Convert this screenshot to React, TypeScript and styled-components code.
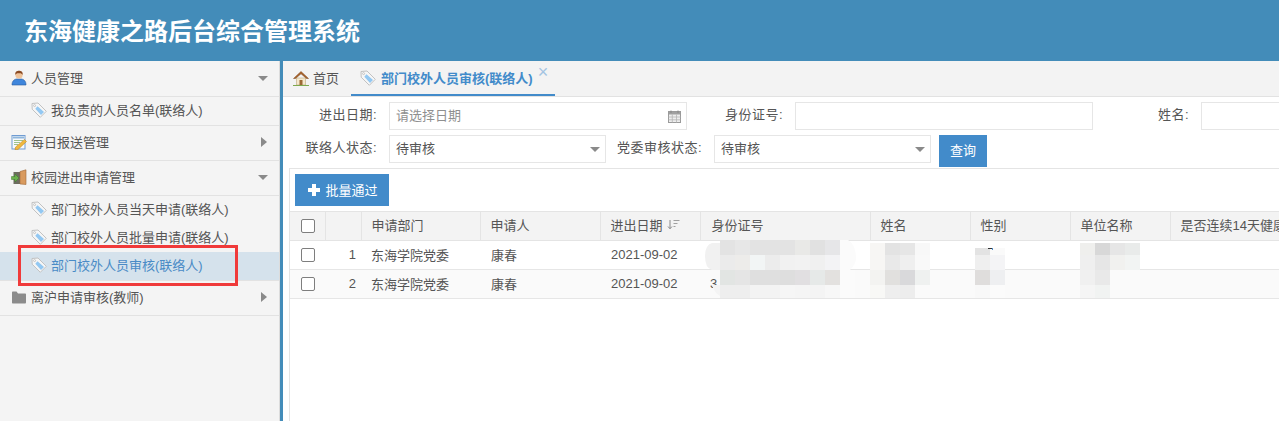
import React from "react";
import styled, { createGlobalStyle } from "styled-components";

const Global = createGlobalStyle`
  html, body { margin: 0; padding: 0; height: 100%; overflow: hidden; background: #fff; }
  body { font-family: "Liberation Sans", "Noto Sans CJK SC", sans-serif; font-size: 13px; color: #555; }
  * { box-sizing: border-box; }
`;

const Page = styled.div`
  position: relative;
  width: 1279px;
  height: 421px;
  overflow: hidden;
  display: flex;
  flex-direction: column;
`;
const Header = styled.header`
  flex: 0 0 61px;
  min-height: 0;
  overflow: hidden;
  background: #438cb9;
  color: #fff;
  font-size: 24px;
  font-weight: 700;
  line-height: 63px;
  padding-left: 24px;
  white-space: nowrap;
`;
const Body = styled.div`
  flex: 1;
  display: flex;
  min-height: 0;
`;
const Sidebar = styled.aside`
  flex: 0 0 280px;
  background: #f4f4f4;
  border-right: 1px solid #dcdcdc;
`;
const Splitter = styled.div`
  flex: 0 0 3px;
  background: #438cb9;
`;
const GroupHead = styled.div<{ $first?: boolean }>`
  height: ${(p) => (p.$first ? "36px" : "35px")};
  display: flex;
  align-items: center;
  padding: 0 10px ${(p) => (p.$first ? "2px" : "3px")} 11px;
  border-bottom: 1px solid #e2e2e2;
  gap: 4px;
`;
const GroupIcon = styled.span`
  width: 16px;
  height: 16px;
  display: flex;
`;
const GroupTitle = styled.span`
  flex: 1;
`;
const CaretDown = styled.i`
  width: 0;
  height: 0;
  border-left: 5px solid transparent;
  border-right: 5px solid transparent;
  border-top: 5px solid #8a8a8a;
  margin-top: 2px;
  margin-right: 1px;
`;
const CaretRight = styled.i`
  width: 0;
  height: 0;
  border-top: 5px solid transparent;
  border-bottom: 5px solid transparent;
  border-left: 6px solid #8a8a8a;
  margin-right: 2px;
`;
const ItemList = styled.div`
  border-bottom: 1px solid #e2e2e2;
`;
const Item = styled.div<{ $active?: boolean }>`
  height: 28px;
  display: flex;
  align-items: center;
  gap: 4px;
  padding: 0 0 3px 31px;
  background: ${(p) => (p.$active ? "#d5e2ec" : "transparent")};
  color: ${(p) => (p.$active ? "#4a8bc6" : "#555")};
`;
const RedMark = styled.div`
  position: absolute;
  left: 18px;
  top: 245px;
  width: 220px;
  height: 41px;
  border: 3px solid #f03a3a;
  pointer-events: none;
`;
const Main = styled.main`
  flex: 1;
  min-width: 0;
  display: flex;
  flex-direction: column;
`;
const TabBar = styled.nav`
  flex: 0 0 36px;
  background: #f3f3f3;
  border-bottom: 1px solid #e2e2e2;
  display: flex;
  padding-left: 10px;
`;
const Tab = styled.div<{ $active?: boolean }>`
  height: 35px;
  display: flex;
  align-items: center;
  gap: ${(p) => (p.$active ? "5px" : "4px")};
  padding: 0 ${(p) => (p.$active ? "7px" : "12px")} 0 ${(p) => (p.$active ? "9px" : "0")};
  border-bottom: 2px solid ${(p) => (p.$active ? "#428bca" : "transparent")};
  color: ${(p) => (p.$active ? "#428bca" : "#555")};
  font-weight: ${(p) => (p.$active ? 700 : 400)};
`;
const Close = styled.span`
  font-size: 18px;
  font-weight: 400;
  line-height: 12px;
  color: #a4c4e2;
  margin: -11px 0 0 0;
`;
const Filters = styled.section`
  padding: 5px 0 0 4px;
  margin-left: 6px;
  border-bottom: 1px solid #e4e4e4;
`;
const FormRow = styled.div`
  display: flex;
  align-items: flex-start;
  height: 28px;
  & + & {
    margin-top: 5px;
    height: 33px;
  }
  white-space: nowrap;
`;
const Label = styled.label<{ $w: number }>`
  flex: 0 0 ${(p) => p.$w}px;
  width: ${(p) => p.$w}px;
  text-align: right;
  line-height: 25px;
  letter-spacing: 0.5px;
  margin-right: 12px;
`;
const Field = styled.div<{ $w: number }>`
  flex: 0 0 ${(p) => p.$w}px;
  width: ${(p) => p.$w}px;
  height: 28px;
  border: 1px solid #e6e6e6;
  background: #fff;
  display: flex;
  align-items: center;
  justify-content: space-between;
  padding: 0 5px 3px 6px;
`;
const Placeholder = styled.span`
  color: #8f8f8f;
`;
const CalendarBox = styled.span`
  display: flex;
  margin-top: 3px;
`;
const FieldCaret = styled(CaretDown)`
  margin: 4px 0 0 0;
`;
const QueryButton = styled.button`
  flex: 0 0 48px;
  height: 32px;
  margin-left: 8px;
  border: 0;
  padding: 0 0 3px;
  background: #428bca;
  color: #fff;
  font: inherit;
`;
const Content = styled.section`
  flex: 1;
  margin-left: 6px;
  border-left: 1px solid #e4e4e4;
  min-height: 0;
`;
const Toolbar = styled.div`
  height: 42px;
  padding: 5px 0 0 5px;
`;
const PrimaryButton = styled.button`
  width: 94px;
  height: 32px;
  border: 0;
  padding: 0 0 1px 1px;
  background: #428bca;
  color: #fff;
  font: inherit;
  display: flex;
  align-items: center;
  justify-content: center;
  gap: 4px;
`;
const Table = styled.table`
  width: 1000px;
  table-layout: fixed;
  border-collapse: collapse;
  white-space: nowrap;
`;
const Th = styled.th<{ $pl?: number }>`
  height: 29px;
  padding: 0 0 3px ${(p) => p.$pl ?? 10}px;
  background: #f3f3f3;
  border: 1px solid #e4e4e4;
  border-width: 1px 1px 1px 0;
  font-weight: 400;
  text-align: left;
  overflow: hidden;
`;
const Td = styled.td<{ $pl?: number }>`
  height: 29px;
  padding: 0 0 2px ${(p) => p.$pl ?? 10}px;
  border-bottom: 1px solid #e6e6e6;
  overflow: hidden;
`;
const NumTd = styled(Td)`
  padding: 0 5px 2px 0;
  text-align: right;
`;
const CheckCell = styled(Td)`
  padding: 0 0 0 11px;
`;
const CheckHead = styled(Th)`
  padding: 0 0 0 11px;
`;
const Row = styled.tr<{ $alt?: boolean }>`
  background: ${(p) => (p.$alt ? "#fafafa" : "#fff")};
`;
const Check = styled.span`
  display: block;
  width: 14px;
  height: 14px;
  border: 1px solid #7e7e7e;
  border-radius: 2px;
  background: #fff;
`;
const SortMark = styled.span`
  margin-left: 1px;
`;
const Mosaic = styled.svg`
  position: absolute;
  left: 0;
  top: 0;
  pointer-events: none;
`;

const TagIcon = () => (
  <svg width="16" height="16" viewBox="0 0 16 16">
    <path d="M1 1.500 7 1 15.300 9.300 9.300 15.300 1.200 7.200Z" fill="#f6f6f6" stroke="#c2c2c2" />
    <path d="M6.500 4.300 13 10 10 13 4.300 6.800Z" fill="#93c8f2" />
    <circle cx="3.600" cy="3.600" r="1" fill="#fff" stroke="#aaa" strokeWidth=".6" />
  </svg>
);
const PersonIcon = () => (
  <svg width="16" height="16" viewBox="0 0 16 16">
    <path d="M1 15c0-4 2-5.500 4.500-6h5c2.500.5 4.500 2 4.500 6Z" fill="#3f86dc" stroke="#2a5c9e" strokeWidth=".6" />
    <circle cx="8" cy="5" r="3.600" fill="#efc39a" />
    <path d="M4.300 5C4 1.500 6 .8 8 .8s4 .7 3.700 4.200C10.800 3.300 9.500 3 8 3.300 6.300 3 5 3.400 4.300 5Z" fill="#8a4a22" />
  </svg>
);
const NoteIcon = () => (
  <svg width="16" height="16" viewBox="0 0 16 16">
    <rect x="1" y="1.500" width="13" height="13.500" fill="#f7fafc" stroke="#6f9bd2" />
    <rect x="2" y="2.500" width="11" height="2" fill="#8fb6dc" />
    <path d="M3 6.500h9M3 8.500h6M3 10.500h4" stroke="#9ec38e" />
    <path d="M13.500 5.500 15.500 7.500 7 15.500 4 16 4.600 13Z" fill="#f0b93e" stroke="#b87d1e" strokeWidth=".5" />
  </svg>
);
const DoorIcon = () => (
  <svg width="16" height="16" viewBox="0 0 16 16">
    <rect x="2.500" y="3" width="7" height="12" fill="#6d6d60" />
    <path d="M9 2.500 15 .8V15.500L9 15Z" fill="#d99a5e" stroke="#9d6a3a" strokeWidth=".6" />
    <path d="M0.500 7.500H4V5l4 4-4 4v-2.500H.5Z" fill="#6cb24e" stroke="#3d7a2a" strokeWidth=".5" />
  </svg>
);
const FolderIcon = () => (
  <svg width="16" height="16" viewBox="0 0 16 16">
    <path d="M1 3.500C1 3 1.300 2.500 2 2.500h3.500L7 4.500h7c.6 0 1 .4 1 1V13.500c0 .5-.4 1-1 1H2c-.6 0-1-.4-1-1Z" fill="#8b8b8b" />
  </svg>
);
const HomeIcon = () => (
  <svg width="16" height="16" viewBox="0 0 16 16">
    <path d="M3.500 8H12.500V15H3.500Z" fill="#f4e8cc" stroke="#b39a6a" strokeWidth=".5" />
    <rect x="6.500" y="10" width="3" height="5" fill="#9c6a36" />
    <path d="M.5 8.500 8 1.500 15.500 8.500 13.500 8.500 8 3.800 2.500 8.500Z" fill="#a8622a" stroke="#7a4316" strokeWidth=".5" />
    <path d="M0 15.500h16" stroke="#7ea84e" />
  </svg>
);
const CalendarIcon = () => (
  <svg width="13" height="13" viewBox="0 0 13 13">
    <rect x=".5" y="1.500" width="12" height="11" fill="#eee" stroke="#9a9a9a" />
    <rect x="1" y="2" width="11" height="2.500" fill="#a0a0a0" />
    <path d="M3 .5V3M10 .5V3" stroke="#888" />
    <path d="M.5 7h12M.5 9.800h12M4.300 4.500v8M8.500 4.500v8" stroke="#b5b5b5" strokeWidth=".8" />
  </svg>
);
const SortIcon = () => (
  <svg width="13" height="11" viewBox="0 0 13 11">
    <path d="M3 1V9.500M1 7.500 3 9.800 5 7.500" fill="none" stroke="#8a8a8a" />
    <path d="M6.500 1.500H12.500M6.500 4.500H10.500M6.500 7.500H8.500" stroke="#a0a0a0" />
  </svg>
);
const PlusIcon = () => (
  <svg width="14" height="14" viewBox="0 0 14 14">
    <path d="M5 1H9V5H13V9H9V13H5V9H1V5H5Z" fill="#fff" />
  </svg>
);

const groups = [
  { title: "人员管理", icon: <PersonIcon />, open: true, items: ["我负责的人员名单(联络人)"] },
  { title: "每日报送管理", icon: <NoteIcon />, open: false, items: [] },
  {
    title: "校园进出申请管理",
    icon: <DoorIcon />,
    open: true,
    items: ["部门校外人员当天申请(联络人)", "部门校外人员批量申请(联络人)", "部门校外人员审核(联络人)"],
  },
  { title: "离沪申请审核(教师)", icon: <FolderIcon />, open: false, items: [] },
];

const columns: { w: number; t?: string; sort?: boolean; pl?: number }[] = [
  { w: 35 }, { w: 36 }, { w: 119, t: "申请部门" }, { w: 120, t: "申请人" },
  { w: 100, t: "进出日期", sort: true }, { w: 170, t: "身份证号", pl: 11 }, { w: 100, t: "姓名" },
  { w: 100, t: "性别" }, { w: 100, t: "单位名称" }, { w: 140, t: "是否连续14天健康" },
];

type Patch = { x: number; ys: number[]; rows: (string | null)[][] };
const patches: Patch[] = [
  {
    x: 720,
    ys: [240, 255, 270, 285],
    rows: [
      ["e3e3e3", "e7e7e7", "e3e3e3", "e3e3e3", "e3e3e3", "e9e9e7", "e1e1e1", "e6e6e8"],
      ["ebebeb", "edecea", "f2f5f5", "ececec", "f1f1f1", "f2f2f2", "f0f0f0", "f3f3f5"],
      ["e2e5e3", "e5e5e5", "dfdfdf", "dfdfdf", "dedede", "e1dfe1", "e6e9e8", "e3e1df"],
      ["eeeeee", "eeeeee", "f3f3f3", "f3f3f3", "f6f6f6", "f5f5f5", "f4f4f4", "f7f7f7"],
    ],
  },
  {
    x: 870,
    ys: [243, 255, 270, 285],
    rows: [
      ["f7f6f4", "e3e3e3", "e6e6e6", "f8f8f8"],
      ["f7f6f4", "e9e9e9", "efefef", "f9f9f9"],
      ["f3f3f1", "e1e0de", "d9d9db", "eff1f0"],
      ["f8f8f6", "eeeeee", "ededed", "fafafa"],
    ],
  },
  {
    x: 975,
    ys: [248, 255, 270, 285],
    rows: [
      ["e3e3e3", "fafafa"],
      ["efefef", "f4f4f6"],
      ["dfdddc", "eeeff1"],
      ["f8f8f8", "fbfbfb"],
    ],
  },
  {
    x: 1080,
    ys: [243, 255, 270, 285],
    rows: [
      ["efefed", "d8d8d8", "e6e6e6", "e9ebea"],
      ["efefef", "e6e6e6", "f1f1ef", "f2f4f3"],
      ["f0f0f0", "e9e9e9", null, null],
      ["f5f5f5", "f1f3f2", null, null],
    ],
  },
];

export default function App() {
  return (
    <Page>
      <Global />
      <Header>东海健康之路后台综合管理系统</Header>
      <Body>
        <Sidebar>
          {groups.map((g, i) => (
            <div key={g.title}>
              <GroupHead $first={i === 0}>
                <GroupIcon>{g.icon}</GroupIcon>
                <GroupTitle>{g.title}</GroupTitle>
                {g.open ? <CaretDown /> : <CaretRight />}
              </GroupHead>
              {g.items.length > 0 && (
                <ItemList>
                  {g.items.map((t) => (
                    <Item key={t} $active={t === "部门校外人员审核(联络人)"}>
                      <GroupIcon><TagIcon /></GroupIcon>
                      {t}
                    </Item>
                  ))}
                </ItemList>
              )}
            </div>
          ))}
        </Sidebar>
        <Splitter />
        <Main>
          <TabBar>
            <Tab><GroupIcon><HomeIcon /></GroupIcon>首页</Tab>
            <Tab $active>
              <GroupIcon><TagIcon /></GroupIcon>
              部门校外人员审核(联络人)
              <Close>×</Close>
            </Tab>
          </TabBar>
          <Filters>
            <FormRow>
              <Label $w={84}>进出日期:</Label>
              <Field $w={298}>
                <Placeholder>请选择日期</Placeholder>
                <CalendarBox><CalendarIcon /></CalendarBox>
              </Field>
              <Label $w={96}>身份证号:</Label>
              <Field $w={298} />
              <Label $w={96}>姓名:</Label>
              <Field $w={298} />
            </FormRow>
            <FormRow>
              <Label $w={84}>联络人状态:</Label>
              <Field $w={217}>待审核<FieldCaret /></Field>
              <Label $w={96}>党委审核状态:</Label>
              <Field $w={217}>待审核<FieldCaret /></Field>
              <QueryButton>查询</QueryButton>
            </FormRow>
          </Filters>
          <Content>
            <Toolbar>
              <PrimaryButton><PlusIcon />批量通过</PrimaryButton>
            </Toolbar>
            <Table>
              <colgroup>
                {columns.map((c, i) => <col key={i} width={c.w} />)}
              </colgroup>
              <thead>
                <tr>
                  <CheckHead><Check /></CheckHead>
                  {columns.slice(1).map((c, i) => (
                    <Th key={i} $pl={c.pl}>
                      {c.t} {c.sort && <SortMark><SortIcon /></SortMark>}
                    </Th>
                  ))}
                </tr>
              </thead>
              <tbody>
                {[1, 2].map((n) => (
                  <Row key={n} $alt={n === 2}>
                    <CheckCell><Check /></CheckCell>
                    <NumTd>{n}</NumTd>
                    <Td>东海学院党委</Td>
                    <Td $pl={11}>康春</Td>
                    <Td $pl={11}>2021-09-02</Td>
                    <Td>{n === 2 ? "3" : ""}</Td>
                    <Td />
                    <Td />
                    <Td />
                    <Td />
                  </Row>
                ))}
              </tbody>
            </Table>
          </Content>
        </Main>
      </Body>
      <RedMark />
      <Mosaic width="1279" height="421" viewBox="0 0 1279 421" shapeRendering="crispEdges">
        <path d="M712 243H720V270H712Q705 268 705 256Q705 245 712 243Z" fill="#f1f1f1" shapeRendering="auto" />
        <path d="M712 285H720V298H724Q714 294 712 285Z" fill="#f4f4f4" shapeRendering="auto" />
        <path d="M840 240H848Q856 245 856 258Q856 264 850 270H840Z" fill="#fbfbfb" shapeRendering="auto" />
        <rect x="840" y="270" width="15" height="28" fill="#fbfbfb" />
        {patches.flatMap((p) =>
          p.rows.flatMap((r, ri) =>
            r.map((c, ci) =>
              c ? (
                <rect
                  key={`${p.x}-${ri}-${ci}`}
                  x={p.x + ci * 15}
                  y={p.ys[ri]}
                  width={15}
                  height={(p.ys[ri + 1] ?? 298) - p.ys[ri]}
                  fill={`#${c}`}
                />
              ) : null
            )
          )
        )}
        <rect x="988" y="248" width="4" height="1" fill="#333" />
        <rect x="992" y="248" width="1" height="2" fill="#4a8ccc" />
      </Mosaic>
    </Page>
  );
}
